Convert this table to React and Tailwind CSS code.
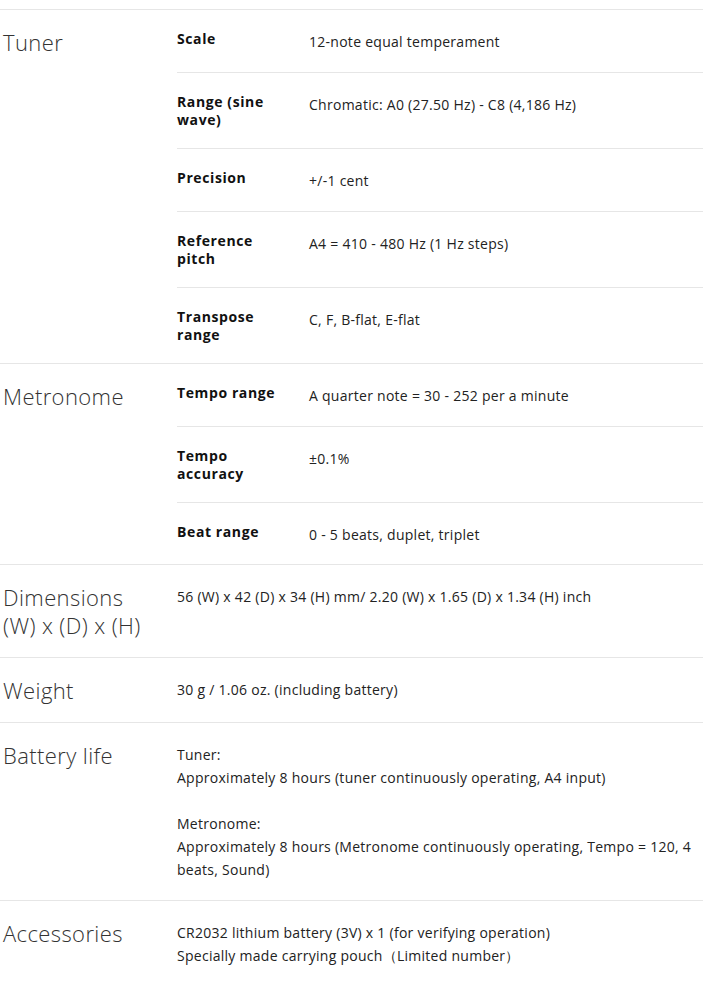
const specs = [
  {
    title: "Tuner",
    rows: [
      { label: "Scale", value: ["12-note equal temperament"] },
      { label: "Range (sine wave)", value: ["Chromatic: A0 (27.50 Hz) - C8 (4,186 Hz)"] },
      { label: "Precision", value: ["+/-1 cent"] },
      { label: "Reference pitch", value: ["A4 = 410 - 480 Hz (1 Hz steps)"] },
      { label: "Transpose range", value: ["C, F, B-flat, E-flat"] },
    ],
  },
  {
    title: "Metronome",
    rows: [
      { label: "Tempo range", value: ["A quarter note = 30 - 252 per a minute"] },
      { label: "Tempo accuracy", value: ["±0.1%"] },
      { label: "Beat range", value: ["0 - 5 beats, duplet, triplet"], tight: true },
    ],
  },
  {
    title: "Dimensions (W) x (D) x (H)",
    value: ["56 (W) x 42 (D) x 34 (H) mm/ 2.20 (W) x 1.65 (D) x 1.34 (H) inch"],
  },
  {
    title: "Weight",
    value: ["30 g / 1.06 oz. (including battery)"],
  },
  {
    title: "Battery life",
    value: [
      "Tuner:",
      "Approximately 8 hours (tuner continuously operating, A4 input)",
      "",
      "Metronome:",
      "Approximately 8 hours (Metronome continuously operating, Tempo = 120, 4 beats, Sound)",
    ],
  },
  {
    title: "Accessories",
    value: [
      "CR2032 lithium battery (3V) x 1 (for verifying operation)",
      "Specially made carrying pouch（Limited number）",
    ],
  },
];

const Value = ({ lines }) => (
  <div className="text-[14px] leading-[23px] tracking-[0.27px] text-[#222]">
    {lines.map((line, i) => (
      <p key={i}>{line === "" ? "\u00a0" : line}</p>
    ))}
  </div>
);

export default function App() {
  return (
    <div className="bg-white pt-[9px] pr-[2px] min-h-[991px]" style={{ fontFamily: '"Open Sans", "Noto Sans", sans-serif' }}>
      {specs.map((section) => (
        <div key={section.title} className="flex border-t border-[#e6e6e6]">
          <h3 className="w-[177px] shrink-0 pl-[3px] pr-[22px] pt-[18px] pb-[18px] text-[22px] leading-[28px] font-light tracking-[0.4px] text-[#333]">
            {section.title}
          </h3>
          <div className="flex-1">
            {section.rows ? (
              section.rows.map((row, i) => (
                <div
                  key={row.label}
                  className={`flex pt-5 ${row.tight ? "pb-[18px]" : "pb-[19px]"} ${i > 0 ? "border-t border-[#e6e6e6]" : ""}`}
                >
                  <div className="w-[132px] shrink-0 pr-5 text-[14px] leading-[18px] font-bold tracking-[0.6px] text-[#111]">
                    {row.label}
                  </div>
                  <div className="flex-1">
                    <Value lines={row.value} />
                  </div>
                </div>
              ))
            ) : (
              <div className="pt-5 pb-[19px]">
                <Value lines={section.value} />
              </div>
            )}
          </div>
        </div>
      ))}
    </div>
  );
}
